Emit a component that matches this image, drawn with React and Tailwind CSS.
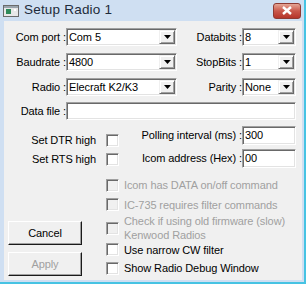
const sunken =
  'border border-t-[#a0a0a0] border-l-[#a0a0a0] border-r-white border-b-white shadow-[inset_1px_1px_0_#696969,inset_-1px_-1px_0_#e3e3e3]'

function Arrow() {
  return (
    <svg width="7" height="4" viewBox="0 0 7 4">
      <path d="M0 0h7L3.5 4z" fill="#000" />
    </svg>
  )
}

function Combo({ value, w }) {
  return (
    <div className={`${w} h-[18px] bg-white flex items-stretch ${sunken}`}>
      <span className="flex-1 pl-[2px] leading-[16px] truncate">{value}</span>
      <div className="w-[16px] m-[1px] bg-[#f0f0f0] flex items-center justify-center border border-t-[#f0f0f0] border-l-[#f0f0f0] border-r-[#696969] border-b-[#696969] shadow-[inset_1px_1px_0_#fff,inset_-1px_-1px_0_#a0a0a0]">
        <Arrow />
      </div>
    </div>
  )
}

function Field({ value, w, h = 'h-[19px]' }) {
  return (
    <div className={`${w} ${h} bg-white pl-[2px] flex items-center ${sunken}`}>
      {value}
    </div>
  )
}

function Box({ disabled }) {
  return (
    <div
      className={`w-[13px] h-[13px] shrink-0 ${disabled ? 'bg-[#f0f0f0]' : 'bg-white'} border border-t-[#a0a0a0] border-l-[#a0a0a0] border-r-white border-b-white shadow-[inset_1px_1px_0_#696969,inset_-1px_-1px_0_#e3e3e3]`}
    />
  )
}

function Check({ label, disabled, h }) {
  return (
    <div className={`flex items-center ${h}`}>
      <Box disabled={disabled} />
      <span className={`ml-[5px] leading-[14px] ${disabled ? 'text-[#a0a0a0]' : 'text-black'}`}>{label}</span>
    </div>
  )
}

function Button({ children, disabled }) {
  return (
    <div
      className={`w-[74px] h-[24px] flex items-center justify-center bg-[#f0f0f0] border border-t-white border-l-white border-r-[#1a1a1a] border-b-[#1a1a1a] shadow-[inset_-1px_-1px_0_#a0a0a0] ${disabled ? 'text-[#a0a0a0]' : 'text-black'}`}
    >
      {children}
    </div>
  )
}

export default function App() {
  return (
    <div
      className="w-[306px] h-[284px] bg-[#cfdff2] flex flex-col border-r-2 border-b-2 border-[#46c3e3] text-[11px] text-black tracking-[-0.1px]"
      style={{ fontFamily: '"Liberation Sans", Arial, sans-serif' }}
    >
      <div className="h-[21px] flex items-center shrink-0">
        <svg className="ml-[3px]" width="16" height="12" viewBox="0 0 16 12">
          <rect x="0.5" y="0.5" width="15" height="11" fill="#e8e8e8" stroke="#6b6b6b" />
          <rect x="1" y="1" width="14" height="2" fill="#9aa4ad" />
          <rect x="3" y="4" width="5" height="5" fill="#2e8a5a" />
          <rect x="11" y="4" width="2" height="2" fill="#fff" />
        </svg>
        <span className="ml-[5px] text-[13.5px] tracking-[0.2px] text-[#1e2b3a]">Setup Radio 1</span>
        <div className="ml-auto mr-[3px] w-[28px] h-[16px] rounded-[3px] bg-gradient-to-b from-[#e4a595] via-[#c9574b] to-[#b5342a] border border-[#8e3a33] flex items-center justify-center">
          <svg width="10" height="9" viewBox="0 0 10 9">
            <path d="M1 1l8 7M9 1L1 8" stroke="#fff" strokeWidth="2.4" />
          </svg>
        </div>
      </div>

      <div className="flex-1 ml-[4px] mr-[2px] mb-[2px] bg-[#f0f0f0] flex flex-col pt-[7px]">
        <div className="flex items-center">
          <span className="w-[62px] text-right">Com port :</span>
          <Combo value="Com 5" w="w-[111px]" />
          <span className="w-[65px] text-right">Databits :</span>
          <Combo value="8" w="w-[54px]" />
        </div>
        <div className="flex items-center mt-[7px]">
          <span className="w-[62px] text-right">Baudrate :</span>
          <Combo value="4800" w="w-[111px]" />
          <span className="w-[65px] text-right">StopBits :</span>
          <Combo value="1" w="w-[54px]" />
        </div>
        <div className="flex items-center mt-[7px]">
          <span className="w-[62px] text-right">Radio :</span>
          <Combo value="Elecraft K2/K3" w="w-[111px]" />
          <span className="w-[65px] text-right">Parity :</span>
          <Combo value="None" w="w-[54px]" />
        </div>
        <div className="flex items-center mt-[6px]">
          <span className="w-[62px] text-right">Data file :</span>
          <Field value="" w="w-[230px]" h="h-[18px]" />
        </div>

        <div className="flex mt-[6px] h-[42px]">
          <div className="flex flex-col pt-[8px] gap-[6px]">
            <div className="flex items-center h-[13px]">
              <span className="w-[92px] text-right">Set DTR high</span>
              <div className="ml-[10px]">
                <Box />
              </div>
            </div>
            <div className="flex items-center h-[13px]">
              <span className="w-[92px] text-right">Set RTS high</span>
              <div className="ml-[10px]">
                <Box />
              </div>
            </div>
          </div>
          <div className="flex flex-col gap-[4px]">
            <div className="flex items-center">
              <span className="w-[123px] text-right">Polling interval (ms) :</span>
              <Field value="300" w="w-[54px]" />
            </div>
            <div className="flex items-center">
              <span className="w-[123px] text-right">Icom address (Hex) :</span>
              <Field value="00" w="w-[54px]" />
            </div>
          </div>
        </div>

        <div className="flex mt-[7px]">
          <div className="w-[102px] pl-[4px] flex flex-col pt-[46px] gap-[7px]">
            <Button>Cancel</Button>
            <Button disabled>Apply</Button>
          </div>
          <div className="flex flex-col">
            <Check label="Icom has DATA on/off command" disabled h="h-[20px]" />
            <Check label="IC-735 requires filter commands" disabled h="h-[19px]" />
            <Check
              label={
                <>
                  Check if using old firmware (slow)
                  <br />
                  Kenwood Radios
                </>
              }
              disabled
              h="h-[28px]"
            />
            <Check label="Use narrow CW filter" h="h-[15px]" />
            <Check label="Show Radio Debug Window" h="h-[22px]" />
          </div>
        </div>
      </div>
    </div>
  )
}
